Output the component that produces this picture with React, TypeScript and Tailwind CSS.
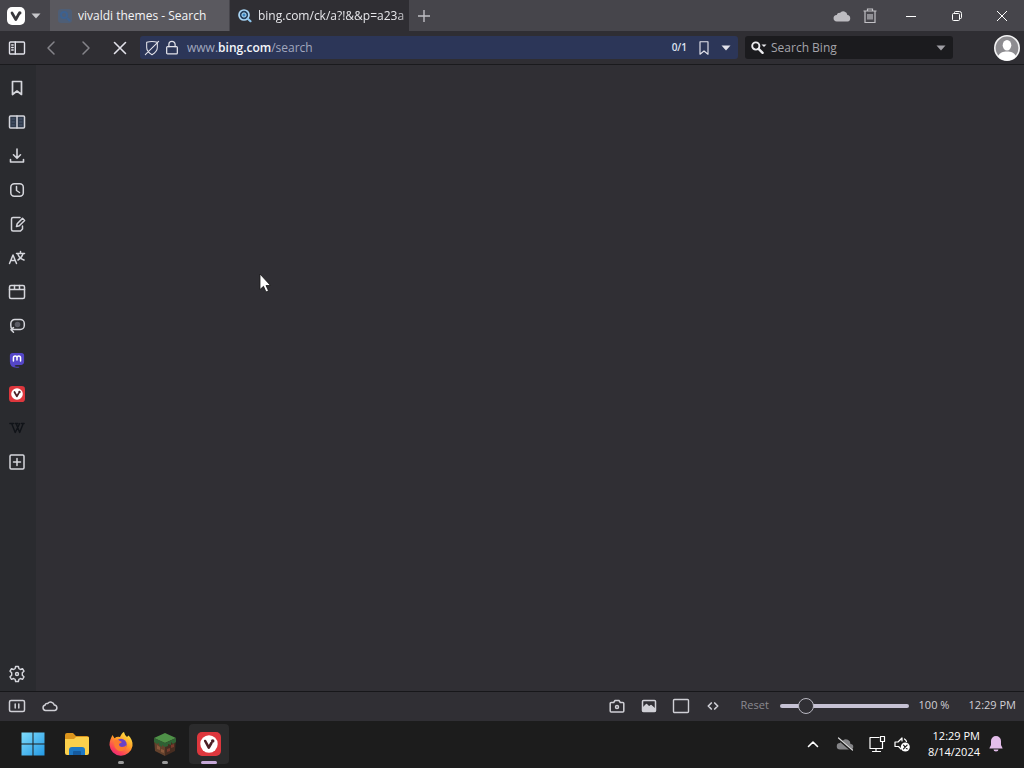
import React, { useState } from "react";

type IconProps = { children: React.ReactNode; className?: string; size?: number; width?: number };

function Icon({ children, className = "", size = 18, width = 1.5 }: IconProps) {
  return (
    <svg
      width={size}
      height={size}
      viewBox="0 0 18 18"
      fill="none"
      stroke="currentColor"
      strokeWidth={width}
      strokeLinecap="round"
      strokeLinejoin="round"
      className={`shrink-0 ${className}`}
      aria-hidden="true"
    >
      {children}
    </svg>
  );
}

function Caret({ className = "" }: { className?: string }) {
  return (
    <svg width="10" height="6" viewBox="0 0 10 6" fill="currentColor" className={`shrink-0 ${className}`} aria-hidden="true">
      <path d="M.5.5h9L5 5.5z" />
    </svg>
  );
}

function IconButton({ label, className = "", children }: { label: string; className?: string; children: React.ReactNode }) {
  return (
    <button type="button" aria-label={label} className={`flex shrink-0 items-center justify-center ${className}`}>
      {children}
    </button>
  );
}

function VivaldiBadge({ size }: { size: number }) {
  return (
    <svg width={size} height={size} viewBox="0 0 24 24" aria-hidden="true">
      <rect width="24" height="24" rx="5" fill="#dd373d" />
      <circle cx="12" cy="12" r="8.7" fill="#fff" />
      <path d="M8.2 9l3.6 6.6 2.6-4.6" fill="none" stroke="#4b2026" strokeWidth="2.6" strokeLinecap="round" strokeLinejoin="round" />
      <circle cx="15.7" cy="9" r="1.8" fill="#4b2026" />
    </svg>
  );
}

function TitleBar() {
  return (
    <header className="flex h-[31px] items-stretch bg-[#46454b] text-[#e6e6ea]">
      <button type="button" aria-label="Vivaldi menu" className="flex w-[50px] shrink-0 items-center gap-1.5 pl-[7px]">
        <svg width="18" height="18" viewBox="0 0 18 18" aria-hidden="true">
          <rect width="18" height="18" rx="5" fill="#fff" />
          <path d="M5 6l3.8 6.5L11.8 7" fill="none" stroke="#39383d" strokeWidth="2.7" strokeLinecap="round" strokeLinejoin="round" />
          <circle cx="12.8" cy="5.9" r="1.7" fill="#39383d" />
        </svg>
        <Caret className="text-[#c7c7cb]" />
      </button>
      <div role="tablist" className="flex gap-px text-[12px]">
        <button type="button" role="tab" aria-selected="false" className="flex w-[179px] items-center gap-1.5 bg-[#5a595f] pl-2 text-left text-[#f4f4f6]">
          <svg width="14" height="14" viewBox="0 0 14 14" aria-hidden="true">
            <rect width="14" height="14" rx="3" fill="#4b607e" opacity=".75" />
            <circle cx="6" cy="6" r="3" fill="none" stroke="#3d6190" strokeWidth="2" />
            <path d="M9 9l3 3" stroke="#3d6190" strokeWidth="2" />
          </svg>
          <span className="truncate">vivaldi themes - Search</span>
        </button>
        <button type="button" role="tab" aria-selected="true" className="flex w-[179px] items-center gap-1.5 bg-[#2f2e33] pr-1 pl-2 text-left">
          <svg width="14" height="14" viewBox="0 0 14 14" className="shrink-0" aria-hidden="true">
            <circle cx="6" cy="6" r="5" fill="#243e5b" stroke="#a9d5f5" strokeWidth="1.7" />
            <circle cx="6" cy="6" r="2.1" fill="#3b86c2" stroke="#b9e0f8" strokeWidth="1" />
            <path d="M9.8 9.8l2.7 2.4" stroke="#8fc6ee" strokeWidth="2.2" strokeLinecap="round" />
          </svg>
          <span className="overflow-hidden mask-r-from-95% mask-r-to-110% whitespace-nowrap">bing.com/ck/a?!&amp;&amp;p=a23a</span>
        </button>
      </div>
      <IconButton label="New tab" className="w-[30px]">
        <svg width="12" height="12" viewBox="0 0 12 12" stroke="#bfbec4" strokeWidth="1.4" aria-hidden="true">
          <path d="M6 0v12M0 6h12" />
        </svg>
      </IconButton>
      <div className="flex-1" />
      <IconButton label="Synced tabs" className="w-7">
        <svg width="18" height="12" viewBox="0 0 18 12" fill="#bdbcc1" aria-hidden="true">
          <path d="M4 11.5a3.3 3.3 0 0 1-.3-6.6 3 3 0 0 1 3.2-2A4.2 4.2 0 0 1 14.4 5a3.3 3.3 0 0 1 .2 6.5z" />
        </svg>
      </IconButton>
      <IconButton label="Closed tabs" className="mr-1 w-7">
        <svg width="14" height="16" viewBox="0 0 14 16" fill="none" stroke="#c2c1c6" strokeWidth="1.2" aria-hidden="true">
          <path d="M.5 3h13M4.5 3V1h5v2M2 3v11.5h10V3M5 6v5.5M7 6v5.5M9 6v5.5" />
        </svg>
      </IconButton>
      <IconButton label="Minimize" className="w-[46px]">
        <svg width="10" height="10" viewBox="0 0 10 10" stroke="#fff" aria-hidden="true">
          <path d="M0 5.500h10" />
        </svg>
      </IconButton>
      <IconButton label="Restore" className="w-[46px]">
        <svg width="10" height="10" viewBox="0 0 10 10" fill="none" stroke="#fff" aria-hidden="true">
          <rect x=".5" y="2.5" width="7" height="7" rx="1" />
          <path d="M2.5 2V1.5a1 1 0 0 1 1-1h4a2 2 0 0 1 2 2v4a1 1 0 0 1-1 1H8" />
        </svg>
      </IconButton>
      <IconButton label="Close" className="w-11">
        <svg width="10" height="10" viewBox="0 0 10 10" stroke="#fff" aria-hidden="true">
          <path d="M0 0l10 10M10 0L0 10" />
        </svg>
      </IconButton>
    </header>
  );
}

function AddressBar() {
  return (
    <div className="flex h-[34px] items-center border-b border-[#1a1a1d] bg-[#2f2e33] pr-1 text-[#e2e2ea]">
      <IconButton label="Toggle panel" className="w-[34px]">
        <Icon width={1.4}>
          <rect x="1.5" y="3" width="15" height="12" rx="1" />
          <path d="M7.3 3v12M3.7 6h1.5M3.7 8.5h1.5M3.7 11h1.5" />
        </Icon>
      </IconButton>
      <IconButton label="Back" className="w-[34px] text-[#85848a]">
        <Icon><path d="M12 3L6 9l6 6" /></Icon>
      </IconButton>
      <IconButton label="Forward" className="w-9 text-[#85848a]">
        <Icon><path d="M6 3l6 6-6 6" /></Icon>
      </IconButton>
      <IconButton label="Stop" className="w-8">
        <Icon width={1.6}><path d="M3.5 3.5l11 11M14.5 3.5l-11 11" /></Icon>
      </IconButton>
      <form className="ml-1 flex h-[23px] flex-1 items-center rounded-[3px] bg-[#2c3658] pl-1 text-[12px]" onSubmit={(e) => e.preventDefault()}>
        <IconButton label="Content blocker" className="w-4">
          <Icon size={16} width={1.2}>
            <path d="M3 2.5q6-1.500 12 0v6c0 4-2.500 6-6 8-3.500-2-6-4-6-8zM1.500 16.500l15-15" />
          </Icon>
        </IconButton>
        <IconButton label="Site information" className="ml-1 w-4">
          <Icon size={16} width={1.4}>
            <rect x="3" y="7.5" width="12" height="8" rx="1" />
            <path d="M5.5 7.5V5a3.500 3.500 0 0 1 7 0v2.500" />
          </Icon>
        </IconButton>
        <label htmlFor="address" className="ml-[7px] text-[#a1a7be]">
          www.<b className="font-semibold text-[#f5f6fb]">bing.com</b>/search
        </label>
        <input id="address" type="text" className="min-w-0 flex-1 bg-transparent outline-none" />
        <span className="text-[10px] font-semibold text-[#dfe3f0]">0/1</span>
        <IconButton label="Bookmark page" className="ml-2 w-[18px]">
          <Icon size={16} width={1.3}><path d="M4.5 2h9v14L9 12.300 4.500 16z" /></Icon>
        </IconButton>
        <IconButton label="Address history" className="w-[25px]"><Caret /></IconButton>
      </form>
      <form className="mr-[41px] ml-[7px] flex h-[23px] w-[208px] items-center rounded-[3px] bg-[#1b1b1e] pr-[7px] pl-1.5 text-[12px]" onSubmit={(e) => e.preventDefault()}>
        <IconButton label="Search engine" className="w-4">
          <svg width="16" height="14" viewBox="0 0 16 14" fill="none" stroke="#ececef" aria-hidden="true">
            <circle cx="4.8" cy="5" r="3.6" strokeWidth="1.9" />
            <path d="M7.6 7.8l4 4" strokeWidth="2.4" strokeLinecap="round" />
            <path d="M10.5 3.5h5L13 6z" fill="#ececef" stroke="none" />
          </svg>
        </IconButton>
        <input aria-label="Search Bing" placeholder="Search Bing" type="text" className="ml-1 min-w-0 flex-1 bg-transparent outline-none placeholder:text-[#a5a4aa] placeholder:opacity-100" />
        <IconButton label="Search history" className="w-[10px] text-[#a09fa5]"><Caret /></IconButton>
      </form>
      <IconButton label="Profile" className="w-[26px]">
        <svg width="26" height="26" viewBox="0 0 26 26" aria-hidden="true">
          <circle cx="13" cy="13" r="12.2" fill="#8d8c90" stroke="#f3f3f4" strokeWidth="1.6" />
          <ellipse cx="13" cy="10.2" rx="4.3" ry="5.3" fill="#fff" />
          <path d="M4 21.5c1.500-4 5-5 9-5s7.500 1 9 5a12 12 0 0 1-18 0z" fill="#fff" />
        </svg>
      </IconButton>
    </div>
  );
}

const panels: { label: string; icon: React.ReactNode }[] = [
  { label: "Bookmarks", icon: <Icon width={1.7}><path d="M4.5 2.500h9v13L9 12l-4.500 3.500z" /></Icon> },
  {
    label: "Reading list",
    icon: (
      <Icon width={1.5}>
        <rect x="1.5" y="3" width="15" height="12" rx="1" fill="#303b4c" />
        <path d="M4 6h2.500M4 9h2.500M4 12h2.500M11.500 6H14M11.500 9H14M11.500 12H14" stroke="#4c5a70" strokeWidth="1" />
        <path d="M9 3v12" />
      </Icon>
    ),
  },
  { label: "Downloads", icon: <Icon width={1.6}><path d="M9 2v9M5.500 7.800L9 11.300l3.500-3.500M2.500 12.500V15h13v-2.500" /></Icon> },
  { label: "History", icon: <Icon><rect x="2.8" y="2.8" width="12.5" height="12.5" rx="3.5" /><path d="M8.500 5.500v4l3 2" /></Icon> },
  { label: "Notes", icon: <Icon><path d="M12 2.500H5A1.500 1.500 0 0 0 3.500 4v10.500A1.500 1.500 0 0 0 5 16h7.500l2-2v-3M8.500 11.500l.7-2.800 5.300-5.300 2.100 2.100-5.300 5.300z" /></Icon> },
  { label: "Translate", icon: <Icon width={1.5}><path d="M1.500 14.500L5 6l3.500 8.500M2.800 11.500h4.500M8.500 4.500h8M12.500 2.500v2M15 4.500c-.7 3-2.500 5-5 6.500M10 5.500c1 2.500 3 4.500 6 5.500" /></Icon> },
  { label: "Windows", icon: <Icon><rect x="1.5" y="2.5" width="15" height="13" rx="1.5" /><path d="M1.500 6.500h15M6.500 2.500V6M11.500 2.500V6" /></Icon> },
  { label: "Sessions", icon: <Icon><path d="M4 12A5 5 0 0 1 2.800 8.500V6.500a4 4 0 0 1 4-4h5.500a4 4 0 0 1 4 4v2a4 4 0 0 1-4 4H3M5.500 10.500L3 12.800l2.500 2.500" /><circle cx="9.5" cy="7.5" r="2.8" fill="#5b5c65" stroke="none" /></Icon> },
  {
    label: "Mastodon",
    icon: (
      <Icon size={16}>
        <path d="M4 1h10q3 0 3 3v7q0 3-3 3.500H9q-3 0-2.500 1.500 2 1 5 .5v1Q1 19 1 11V4q0-3 3-3z" fill="#5446c7" stroke="none" />
        <path d="M5 10V6.500Q5 4.500 7 4.500T9 6.500V9M9 6.500Q9 4.500 11 4.500t2 2V10" stroke="#fff" strokeWidth="1.7" />
      </Icon>
    ),
  },
  { label: "Vivaldi community", icon: <VivaldiBadge size={16} /> },
  { label: "Wikipedia", icon: <Icon size={16} width={1.6} className="text-[#101318]"><path d="M1 4h4M3 4l4 10 5-10M7 4h3M8 4l4 10 4-10M14 4h3" /></Icon> },
  { label: "Add web panel", icon: <Icon><rect x="2" y="2" width="14" height="14" rx="1.2" /><path d="M9 5.500v7M5.500 9h7" /></Icon> },
];

function SidePanel() {
  return (
    <nav aria-label="Panels" className="flex w-9 shrink-0 flex-col bg-[#2a2b2f] pt-1.5 text-[#d5d6dc]">
      {panels.map((p) => (
        <IconButton key={p.label} label={p.label} className="h-[34px] w-[34px]">{p.icon}</IconButton>
      ))}
      <IconButton label="Settings" className="mt-auto h-[34px] w-[34px]">
        <Icon width={1.4}>
          <path d="M7.6 1.500h2.800l.5 2.200 1.500.8 2.100-.8 1.500 2.500-1.700 1.600v2.400l1.700 1.600-1.500 2.500-2.100-.8-1.500.8-.5 2.200H7.600l-.5-2.200-1.500-.8-2.100.8L2 11.800l1.700-1.600V7.800L2 6.200l1.500-2.500 2.100.8 1.500-.8z" />
          <circle cx="9" cy="9" r="1.5" />
        </Icon>
      </IconButton>
    </nav>
  );
}

function StatusBar() {
  const [zoom, setZoom] = useState(100);
  return (
    <footer className="flex h-[30px] items-center border-t border-[#17171a] bg-[#302f34] pr-2 pb-0.5 text-[11px] text-[#d0d0d6]">
      <IconButton label="Break mode" className="w-[34px]">
        <Icon><rect x="1.5" y="3.5" width="15" height="11" rx="1.5" /><path d="M7.200 7v4M10.800 7v4" /></Icon>
      </IconButton>
      <IconButton label="Sync" className="w-8">
        <Icon><path d="M4.500 13.500a2.800 2.800 0 0 1-.3-5.500 2 2 0 0 1 2.500-1.500A3.800 3.800 0 0 1 13.300 8a2.800 2.800 0 0 1 .5 5.500z" /></Icon>
      </IconButton>
      <div className="flex-1" />
      <IconButton label="Capture page" className="w-8">
        <Icon><path d="M3.200 5.500h2.500L7 3.500h4l1.300 2h2.500a1 1 0 0 1 1 1V14a1 1 0 0 1-1 1H3.200a1 1 0 0 1-1-1V6.500a1 1 0 0 1 1-1z" /><circle cx="9" cy="10" r="1.5" /></Icon>
      </IconButton>
      <IconButton label="Toggle images" className="w-8">
        <Icon><rect x="2.5" y="3.5" width="13" height="11" rx="1" /><path d="M3 14v-3l3.500-3.500 2.500 2.500 2-1.500L15 12v2z" fill="currentColor" /></Icon>
      </IconButton>
      <IconButton label="Tile tabs" className="w-8">
        <Icon width={1.4}><rect x="1.5" y="2.5" width="15" height="13" rx="1" /></Icon>
      </IconButton>
      <IconButton label="Page actions" className="w-8">
        <Icon width={1.7}><path d="M7.300 6L4.300 9l3 3M10.700 6l3 3-3 3" /></Icon>
      </IconButton>
      <button type="button" className="ml-3 w-7 text-left text-[#8b8a90]">Reset</button>
      <input
        type="range"
        aria-label="Page zoom"
        min={20}
        max={500}
        value={zoom}
        onChange={(e) => setZoom(Number(e.target.value))}
        className="ml-[11px] h-4 w-[129px] appearance-none bg-transparent [&::-webkit-slider-runnable-track]:h-1 [&::-webkit-slider-runnable-track]:rounded-full [&::-webkit-slider-runnable-track]:bg-[#c6c2d4] [&::-webkit-slider-thumb]:-mt-1.5 [&::-webkit-slider-thumb]:size-4 [&::-webkit-slider-thumb]:appearance-none [&::-webkit-slider-thumb]:rounded-full [&::-webkit-slider-thumb]:border [&::-webkit-slider-thumb]:border-[#b9b8c2] [&::-webkit-slider-thumb]:bg-[#302f34]"
      />
      <span className="ml-[10px] w-[50px] whitespace-nowrap">{zoom} %</span>
      <button type="button" className="whitespace-nowrap">12:29 PM</button>
    </footer>
  );
}

function TaskButton({ label, state, children }: { label: string; state?: "open" | "active"; children: React.ReactNode }) {
  return (
    <button
      type="button"
      aria-label={label}
      className={`flex h-10 w-10 flex-col items-center rounded-[4px] pt-[7px] ${state === "active" ? "bg-[#2b2b2c]" : ""}`}
    >
      {children}
      {state === "active" && <span className="mt-[4px] h-[3px] w-4 shrink-0 rounded-full bg-[#c6a9d8]" />}
      {state === "open" && <span className="mt-[4px] h-[3px] w-1.5 shrink-0 rounded-full bg-[#9b9b9b]" />}
    </button>
  );
}

function Taskbar() {
  return (
    <div className="flex h-[47px] items-center bg-[#1c1c1c] pb-0.5 pl-[13px] text-white">
      <div className="flex gap-1">
        <TaskButton label="Start">
          <svg width="26" height="26" viewBox="0 0 26 26" aria-hidden="true">
            <defs>
              <linearGradient id="win" x1="0" y1="0" x2="1" y2="1">
                <stop stopColor="#7fdcfc" />
                <stop offset="1" stopColor="#2399e5" />
              </linearGradient>
            </defs>
            <path d="M1.500 1.500h11v11h-11zM13.500 1.500h11v11h-11zM1.500 13.500h11v11h-11zM13.500 13.500h11v11h-11z" fill="url(#win)" />
          </svg>
        </TaskButton>
        <TaskButton label="File Explorer">
          <svg width="26" height="26" viewBox="0 0 26 26" aria-hidden="true">
            <path d="M1 4q0-2 2-2h6l3 3h11q2 0 2 2v5H1z" fill="#dc951c" />
            <path d="M1 8h9l2-2h12q1 0 1 1v15q0 2-2 2H3q-2 0-2-2z" fill="#fbd04c" />
            <path d="M5 24v-5q0-3 3-3h10q3 0 3 3v5z" fill="#1e78c4" />
            <path d="M9 24v-3q0-1 1-1h6q1 0 1 1v3z" fill="#155a9e" />
          </svg>
        </TaskButton>
        <TaskButton label="Firefox" state="open">
          <svg width="26" height="26" viewBox="0 0 26 26" aria-hidden="true">
            <defs>
              <linearGradient id="fox" x1=".85" y1="0" x2=".2" y2="1">
                <stop stopColor="#fff04a" />
                <stop offset=".45" stopColor="#ff9a26" />
                <stop offset=".8" stopColor="#fb3f5a" />
                <stop offset="1" stopColor="#e3247e" />
              </linearGradient>
            </defs>
            <path d="M4.500 4l2 3.200Q9 5.200 12 6q2-4.500 4-5 .5 3 3 5l1.500-1.500C23 7 25 10.500 24.500 15A11.600 11.600 0 0 1 1.500 14C1.500 9.500 3 7 4.500 4z" fill="url(#fox)" />
            <circle cx="13" cy="13.500" r="5.700" fill="#6942c8" />
            <path d="M7 9q3-1 5 1l2 1-3 2q0 3 3 3 3 0 4.500-2c0 4-3 6-6 6-5 0-8-6-5.500-11z" fill="#fb7b2f" />
          </svg>
        </TaskButton>
        <TaskButton label="Minecraft" state="open">
          <svg width="26" height="26" viewBox="0 0 26 26" aria-hidden="true">
            <path d="M2 7l11 5v13L3 20z" fill="#63412c" />
            <path d="M24 7l-11 5v13l10-5z" fill="#462c20" />
            <path d="M13 2l11 5-11 5L2 7z" fill="#4f9148" />
            <path d="M2 7l11 5v4l-3-2v2l-3-2v-2l-2 1-3-2zM24 7l-11 5v4l3-1v-2l3 1v-3l2 2 3-2z" fill="#2f6134" />
            <path d="M5 14l3 2v3l-3-1zM9 18l3 1v3l-3-1z" fill="#89583b" />
            <path d="M15 18l3-1v3l-3 1zM19 14l3-1v3l-3 1z" fill="#783a2c" />
          </svg>
        </TaskButton>
        <TaskButton label="Vivaldi" state="active">
          <span className="flex size-[26px] items-center justify-center"><VivaldiBadge size={24} /></span>
        </TaskButton>
      </div>
      <div className="flex-1" />
      <IconButton label="Show hidden icons" className="w-8">
        <Icon width={1.6}><path d="M4.500 11.500L9 7l4.500 4.500" /></Icon>
      </IconButton>
      <IconButton label="OneDrive" className="w-8">
        <Icon>
          <path d="M4 14.500a3 3 0 0 1 0-6.500 3 3 0 0 1 3-2.500 4.500 4.500 0 0 1 7.500 3.500 2.700 2.700 0 0 1 0 5.500z" fill="#858588" stroke="none" />
          <path d="M2 3.500l14 12" stroke="#1c1c1c" strokeWidth="2.600" />
          <path d="M2.500 3l14 12" stroke="#dadada" strokeWidth="1.200" />
        </Icon>
      </IconButton>
      <button type="button" aria-label="Network and volume, muted" className="flex h-10 w-[57px] items-center justify-center gap-[7px]">
        <Icon width={1.2}>
          <path d="M11 2.500H2v11h12.500v-4M8 13.500v3M4.500 16.500h8M12.500 1.500h4v5h-4zM14.500 6.500v3" />
        </Icon>
        <Icon width={1.2}>
          <path d="M8 14L5.500 11.500H2V7h3L9 3v3M11.500 4q1.500 1 2 2.500" />
          <circle cx="12.300" cy="12" r="4.500" fill="#fff" stroke="none" />
          <path d="M10.500 10.200l3.600 3.600M14.100 10.200l-3.600 3.600" stroke="#1c1c1c" />
        </Icon>
      </button>
      <button type="button" className="ml-1 w-[58px] text-right text-[11px] leading-4 whitespace-nowrap">
        12:29 PM
        <br />
        8/14/2024
      </button>
      <IconButton label="Notifications" className="mr-3 w-8">
        <svg width="16" height="18" viewBox="0 0 16 18" fill="#e3bdea" aria-hidden="true">
          <path d="M8 1a5 5 0 0 1 5 5v4l1.500 3v.5h-13V13L3 10V6a5 5 0 0 1 5-5zM5.500 14.500h5a2.500 2 0 0 1-5 0z" />
        </svg>
      </IconButton>
    </div>
  );
}

export default function App() {
  return (
    <div className="flex min-h-screen flex-col bg-[#302f34] font-['Open_Sans','Noto_Sans',sans-serif]">
      <TitleBar />
      <AddressBar />
      <div className="flex flex-1">
        <SidePanel />
        <main className="relative flex-1 bg-[#302f34]">
          <svg width="12" height="20" viewBox="0 0 12 20" className="absolute top-52 left-[223px]" aria-hidden="true">
            <path d="M1 1v15.500l3.500-3.200L7 19l2.500-1.200L7 12.500h4.500z" fill="#fff" stroke="#161618" strokeWidth=".8" />
          </svg>
        </main>
      </div>
      <StatusBar />
      <Taskbar />
    </div>
  );
}
